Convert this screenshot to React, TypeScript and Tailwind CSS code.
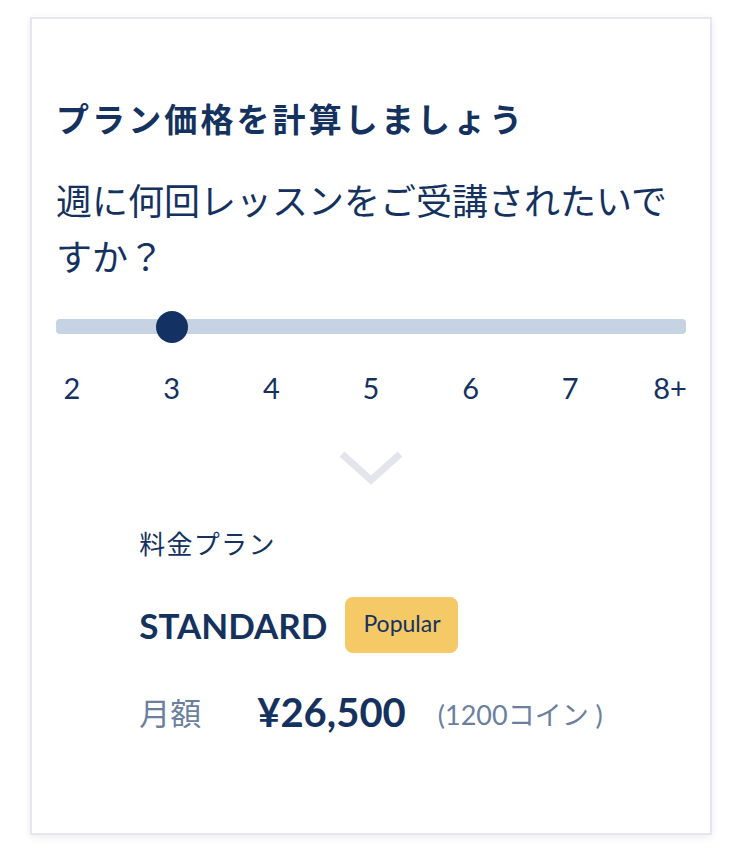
import React from "react";

const NAVY = "text-[#15325f]";

export default function App() {
  const values = ["2", "3", "4", "5", "6", "7", "8+"];
  const selected = 1;
  const step = (630 - 32) / 6;
  return (
    <div className="min-h-[860px] bg-white pt-[17px] pl-[30px]" style={{ fontFamily: 'Lato, "Noto Sans CJK JP", sans-serif' }}>
      <div className="w-[682px] h-[818px] border-2 border-[#e6e6ee] bg-white shadow-[0_2px_8px_rgba(0,0,0,0.08)] px-[24px] pt-[75px]">
        <h1 className={`text-[33px] leading-[48px] font-bold tracking-[3.1px] ${NAVY}`} style={{ fontFamily: '"Noto Sans CJK JP", sans-serif' }}>
          プラン価格を計算しましょう
        </h1>
        <p className={`mt-[29px] text-[36px] leading-[56px] ${NAVY}`} style={{ fontFamily: '"Noto Sans CJK JP", sans-serif' }}>
          週に何回レッスンをご受講されたいですか？
        </p>
        <div className="mt-[36px] relative h-[15px] w-[630px] rounded-[4px] bg-[#c5d3e3]">
          <div
            className="absolute top-1/2 h-[32px] w-[32px] -translate-y-1/2 rounded-full bg-[#133263]"
            style={{ left: selected * step }}
          />
        </div>
        <div className={`mt-[36px] flex w-[630px] justify-between text-[29px] leading-[36px] ${NAVY}`}>
          {values.map((v) => (
            <span key={v} className="w-[32px] flex justify-center whitespace-nowrap">
              {v}
            </span>
          ))}
        </div>
        <div className="mt-[45px] flex justify-center">
          <svg width="62" height="34" viewBox="0 0 62 34" fill="none">
            <polyline points="2,3 31,29 60,3" stroke="#e2e5ec" strokeWidth="7" />
          </svg>
        </div>
        <div className="mt-[40px] flex justify-center">
          <div>
            <div className={`text-[26px] leading-[36px] tracking-[1.3px] ${NAVY}`} style={{ fontFamily: '"Noto Sans CJK JP", sans-serif' }}>
              料金プラン
            </div>
            <div className="mt-[36px] flex items-center gap-[18px]">
              <span className={`text-[35px] font-bold leading-[56px] ${NAVY}`}>STANDARD</span>
              <span className={`flex h-[56px] w-[113px] items-center justify-center rounded-[8px] bg-[#f5c966] text-[23px] ${NAVY} pb-[4px]`}>
                Popular
              </span>
            </div>
            <div className="mt-[35px] flex items-center h-[48px]">
              <span className="text-[31px] text-[#6b7f9e]" style={{ fontFamily: '"Noto Sans CJK JP", sans-serif' }}>月額</span>
              <span className={`ml-[56px] text-[40px] font-bold ${NAVY}`}>¥26,500</span>
              <span className="ml-[32px] mt-[6px] text-[27px] text-[#6b7f9e]">
                (1200<span style={{ fontFamily: '"Noto Sans CJK JP", sans-serif' }}>コイン</span> )
              </span>
            </div>
          </div>
        </div>
      </div>
    </div>
  );
}
